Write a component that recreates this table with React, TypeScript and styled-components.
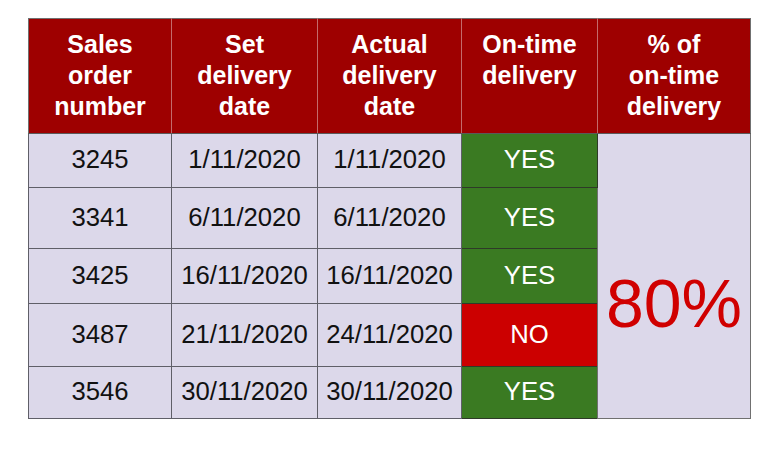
import type { FC } from 'react'
import styled, { createGlobalStyle } from 'styled-components'

type Status = 'yes' | 'no'

interface OrderRow {
	order: string
	set: string
	actual: string
	status: Status
	height: number
}

const rows: OrderRow[] = [
	{ order: '3245', set: '1/11/2020', actual: '1/11/2020', status: 'yes', height: 54 },
	{ order: '3341', set: '6/11/2020', actual: '6/11/2020', status: 'yes', height: 61 },
	{ order: '3425', set: '16/11/2020', actual: '16/11/2020', status: 'yes', height: 55 },
	{ order: '3487', set: '21/11/2020', actual: '24/11/2020', status: 'no', height: 63 },
	{ order: '3546', set: '30/11/2020', actual: '30/11/2020', status: 'yes', height: 52 },
]

const columns = [
	{ label: ['Sales', 'order', 'number'], width: 143 },
	{ label: ['Set', 'delivery', 'date'], width: 146 },
	{ label: ['Actual', 'delivery', 'date'], width: 144 },
	{ label: ['On-time', 'delivery'], width: 136 },
	{ label: ['% of', 'on-time', 'delivery'], width: 153 },
]

const App: FC = () => {
	return (
		<>
			<GlobalStyle />
			<Page>
				<Table>
					<colgroup>
						{columns.map((c, idx) => (
							<col key={`col-${idx}`} style={{ width: c.width }} />
						))}
					</colgroup>
					<thead>
						<tr>
							{columns.map((c, idx) => (
								<Th key={`th-${idx}`}>
									{c.label.map(line => (
										<div key={line}>{line}</div>
									))}
								</Th>
							))}
						</tr>
					</thead>
					<tbody>
						{rows.map((row, ridx) => (
							<tr key={`row-${row.order}`} style={{ height: row.height }}>
								<Td>{row.order}</Td>
								<Td>{row.set}</Td>
								<Td>{row.actual}</Td>
								<StatusTd $status={row.status}>
									{row.status === 'yes' ? 'YES' : 'NO'}
								</StatusTd>
								{ridx === 0 ? (
									<Percent rowSpan={rows.length}>80%</Percent>
								) : null}
							</tr>
						))}
					</tbody>
				</Table>
			</Page>
		</>
	)
}

export default App

const GlobalStyle = createGlobalStyle`
	html, body {
		margin: 0;
		background: #ffffff;
	}
	body {
		font-family: 'Liberation Sans', Arial, sans-serif;
	}
`

const Page = styled.div`
	width: 768px;
	height: 455px;
	padding: 18px 0 0 28px;
	box-sizing: border-box;
`

const Table = styled.table`
	border-collapse: collapse;
	table-layout: fixed;
	width: 722px;
	border: 1px solid #707070;
`

const Th = styled.th`
	height: 115px;
	box-sizing: border-box;
	padding: 10px 0 0;
	vertical-align: top;
	background: #9e0000;
	color: #ffffff;
	font-size: 25px;
	font-weight: bold;
	line-height: 31px;
	text-align: center;
	border-left: 1px solid #c46a6a;
	border-bottom: 1px solid #5a5a5a;

	&:first-child {
		border-left: 1px solid #707070;
	}
`

const Td = styled.td`
	padding: 0 0 2px;
	background: #dcd8ea;
	color: #111111;
	font-size: 25.7px;
	text-align: center;
	vertical-align: middle;
	border: 1px solid #5f5f68;
	white-space: nowrap;
`

const StatusTd = styled(Td)<{ $status: Status }>`
	background: ${({ $status }) => ($status === 'yes' ? '#3a7a22' : '#cc0000')};
	color: #ffffff;
	border-color: #2e3a28;
`

const Percent = styled.td`
	padding: 54px 0 0;
	background: #dcd8ea;
	color: #d00000;
	font-size: 68px;
	text-align: center;
	vertical-align: middle;
	border: 1px solid #707070;
`
